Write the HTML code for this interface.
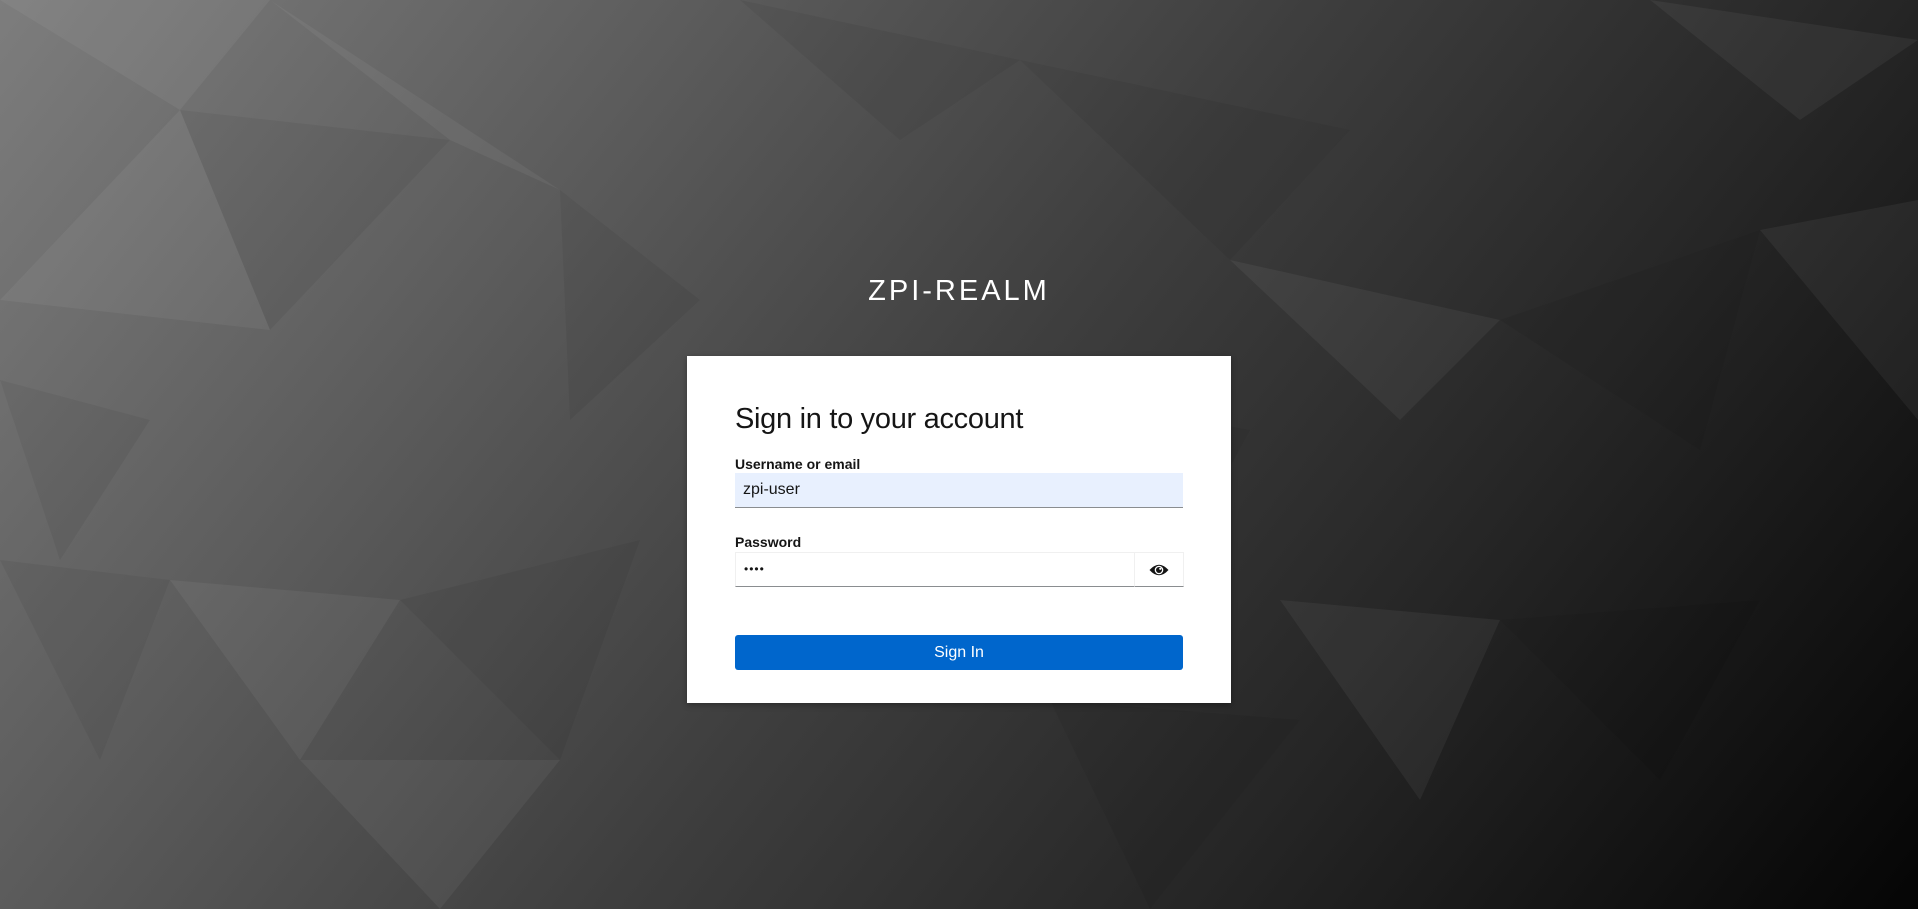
<!DOCTYPE html>
<html><head><meta charset="utf-8">
<style>
*{margin:0;padding:0;box-sizing:border-box}
html,body{width:1918px;height:909px;overflow:hidden}
body{font-family:"Liberation Sans",sans-serif;position:relative;
background:linear-gradient(128deg,#7d7d7d 0%,#5a5a5a 28%,#3e3e3e 50%,#262626 72%,#050505 100%);}
svg.bg{position:absolute;left:0;top:0}
.title{position:absolute;left:0;width:1918px;top:275px;text-align:center;color:#fff;font-size:29px;letter-spacing:3px;font-weight:300}
.card{position:absolute;left:687px;top:356px;width:544px;height:347px;background:#fff;box-shadow:0 2px 6px rgba(0,0,0,.3)}
h1{position:absolute;left:48px;top:47px;font-size:29px;font-weight:400;color:#151515;letter-spacing:-0.3px}
.lbl{position:absolute;left:48px;font-size:14px;font-weight:bold;color:#151515}
.inp{position:absolute;left:48px;width:448px;height:35px;border-bottom:1.5px solid #8a8d90;font-size:16px;color:#151515;padding:0 8px;line-height:33px}
.u{top:117px;background:#e8f0fe}
.p{top:196px;border-top:1px solid #f0f0f0;border-left:1px solid #f0f0f0;width:400px}
.eye{position:absolute;left:447px;top:196px;width:50px;height:35px;border:1px solid #f0f0f0;border-bottom:1.5px solid #8a8d90}
.btn{position:absolute;left:48px;top:279px;width:448px;height:35px;background:#0066cc;border-radius:3px;color:#fff;font-size:16px;text-align:center;line-height:35px}
</style></head><body>
<svg class="bg" width="1918" height="909">
<g fill-opacity="0.05">
<polygon points="0,0 270,0 180,110" fill="#fff"/>
<polygon points="180,110 450,140 270,330" fill="#000"/>
<polygon points="270,0 560,190 450,140" fill="#fff"/>
<polygon points="0,300 180,110 270,330" fill="#fff"/>
<polygon points="560,190 700,300 570,420" fill="#000"/>
<polygon points="740,0 1020,60 900,140" fill="#000"/>
<polygon points="1020,60 1350,130 1230,260" fill="#000"/>
<polygon points="1230,260 1500,320 1400,420" fill="#fff"/>
<polygon points="1500,320 1760,230 1700,450" fill="#000"/>
<polygon points="0,560 170,580 100,760" fill="#000"/>
<polygon points="170,580 400,600 300,760" fill="#fff"/>
<polygon points="400,600 640,540 560,760" fill="#000"/>
<polygon points="1280,600 1500,620 1420,800" fill="#fff"/>
<polygon points="1500,620 1760,600 1660,780" fill="#000"/>
<polygon points="1650,0 1918,40 1800,120" fill="#fff"/>
<polygon points="1760,230 1918,200 1918,420" fill="#fff"/>
<polygon points="1050,700 1300,720 1150,909" fill="#000"/>
<polygon points="300,760 560,760 440,909" fill="#fff"/>
<polygon points="0,380 150,420 60,560" fill="#000"/>
<polygon points="1090,400 1250,430 1180,560" fill="#000"/>
</g>
</svg>
<div class="title">ZPI-REALM</div>
<div class="card">
<h1>Sign in to your account</h1>
<div class="lbl" style="top:100px">Username or email</div>
<div class="inp u">zpi-user</div>
<div class="lbl" style="top:178px">Password</div>
<div class="inp p" style="font-size:12px;letter-spacing:1px">••••</div>
<div class="eye"><svg width="50" height="34" viewBox="0 0 50 34"><path d="M14.5 17 Q24 6.5 33.5 17 Q24 27.5 14.5 17Z" fill="#151515"/><circle cx="24" cy="17" r="4.3" fill="#fff"/><circle cx="24" cy="17" r="3" fill="#151515"/><circle cx="25.3" cy="15.8" r="1.1" fill="#fff"/></svg></div>
<div class="btn">Sign In</div>
</div>
</body></html>
